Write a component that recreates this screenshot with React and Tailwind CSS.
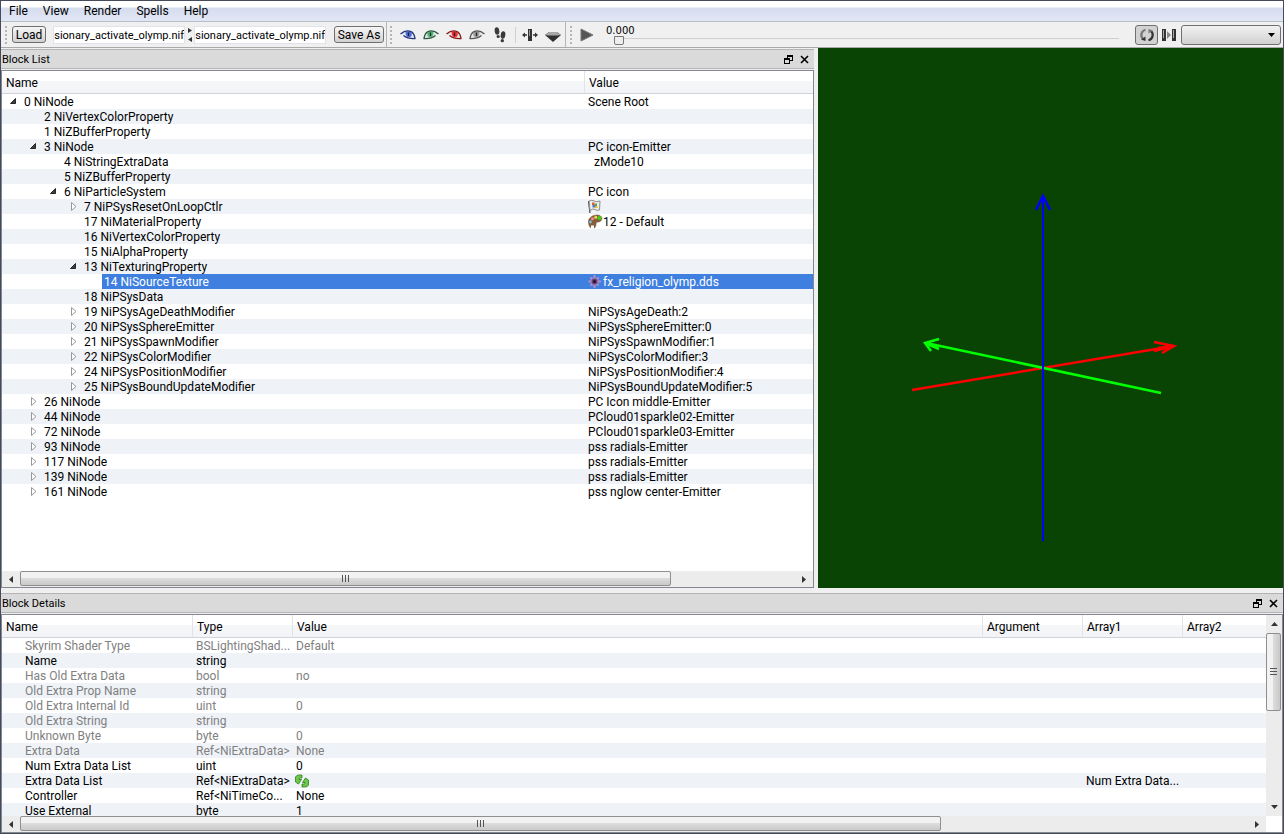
const menuItems = ["File", "View", "Render", "Spells", "Help"];

// depth, state of the arrow, name, value, icon
const blocks = [
    { depth: 0, arrow: "open", name: "0 NiNode", value: "Scene Root" },
    { depth: 1, name: "2 NiVertexColorProperty" },
    { depth: 1, name: "1 NiZBufferProperty" },
    { depth: 1, arrow: "open", name: "3 NiNode", value: "PC icon-Emitter" },
    { depth: 2, name: "4 NiStringExtraData", value: "\u00a0\u00a0zMode10" },
    { depth: 2, name: "5 NiZBufferProperty" },
    { depth: 2, arrow: "open", name: "6 NiParticleSystem", value: "PC icon" },
    { depth: 3, arrow: "closed", name: "7 NiPSysResetOnLoopCtlr", icon: "flag" },
    { depth: 3, name: "17 NiMaterialProperty", value: "12 - Default", icon: "palette" },
    { depth: 3, name: "16 NiVertexColorProperty" },
    { depth: 3, name: "15 NiAlphaProperty" },
    { depth: 3, arrow: "open", name: "13 NiTexturingProperty" },
    { depth: 4, name: "14 NiSourceTexture", value: "fx_religion_olymp.dds", icon: "flower", selected: true },
    { depth: 3, name: "18 NiPSysData" },
    { depth: 3, arrow: "closed", name: "19 NiPSysAgeDeathModifier", value: "NiPSysAgeDeath:2" },
    { depth: 3, arrow: "closed", name: "20 NiPSysSphereEmitter", value: "NiPSysSphereEmitter:0" },
    { depth: 3, arrow: "closed", name: "21 NiPSysSpawnModifier", value: "NiPSysSpawnModifier:1" },
    { depth: 3, arrow: "closed", name: "22 NiPSysColorModifier", value: "NiPSysColorModifier:3" },
    { depth: 3, arrow: "closed", name: "24 NiPSysPositionModifier", value: "NiPSysPositionModifier:4" },
    { depth: 3, arrow: "closed", name: "25 NiPSysBoundUpdateModifier", value: "NiPSysBoundUpdateModifier:5" },
    { depth: 1, arrow: "closed", name: "26 NiNode", value: "PC Icon middle-Emitter" },
    { depth: 1, arrow: "closed", name: "44 NiNode", value: "PCloud01sparkle02-Emitter" },
    { depth: 1, arrow: "closed", name: "72 NiNode", value: "PCloud01sparkle03-Emitter" },
    { depth: 1, arrow: "closed", name: "93 NiNode", value: "pss radials-Emitter" },
    { depth: 1, arrow: "closed", name: "117 NiNode", value: "pss radials-Emitter" },
    { depth: 1, arrow: "closed", name: "139 NiNode", value: "pss radials-Emitter" },
    { depth: 1, arrow: "closed", name: "161 NiNode", value: "pss nglow center-Emitter" },
];

const details = [
    { name: "Skyrim Shader Type", type: "BSLightingShad...", value: "Default", off: true },
    { name: "Name", type: "string" },
    { name: "Has Old Extra Data", type: "bool", value: "no", off: true },
    { name: "Old Extra Prop Name", type: "string", off: true },
    { name: "Old Extra Internal Id", type: "uint", value: "0", off: true },
    { name: "Old Extra String", type: "string", off: true },
    { name: "Unknown Byte", type: "byte", value: "0", off: true },
    { name: "Extra Data", type: "Ref<NiExtraData>", value: "None", off: true },
    { name: "Num Extra Data List", type: "uint", value: "0" },
    { name: "Extra Data List", type: "Ref<NiExtraData>", icon: "refresh", array1: "Num Extra Data..." },
    { name: "Controller", type: "Ref<NiTimeCo...", value: "None" },
    { name: "Use External", type: "byte", value: "1" },
];

const indents = ["w-[20px]", "w-[40px]", "w-[60px]", "w-[80px]", "w-[100px]"];

function Arrow({ state }) {
    if (state === "open") {
        return (
            <svg width="10" height="10" className="mr-1">
                <path d="M7.500 1.500V6.500H2.500Z" fill="#404040" stroke="#262626" />
            </svg>
        );
    }
    return (
        <svg width="10" height="10" className="mr-1">
            <path d="M3.500 0.500L8 4.500L3.500 8.500Z" fill="#fff" stroke="#989898" />
        </svg>
    );
}

function CellIcon({ name }) {
    if (name === "flag") {
        return (
            <svg width="15" height="15" viewBox="0 0 15 15" className="shrink-0">
                <path d="M0.500 2L2 14" stroke="#444" strokeWidth="1.200" />
                <path d="M1 2Q4 0.500 6 2T12 2L11.500 11Q9 12 7 10.500T2 11.500Z" fill="#eeeeea" stroke="#8d8d88" />
                <path d="M4 3.500h2.500v2.500H4z" fill="#e8553a" />
                <path d="M6.500 4.500H9V7H6.500z" fill="#56a84c" />
                <path d="M4.500 6h2.500v2.500H4.500z" fill="#4674cc" />
                <path d="M7 7h2.500v2H7z" fill="#efb92e" />
            </svg>
        );
    }
    if (name === "palette") {
        return (
            <svg width="15" height="15" viewBox="0 0 15 15" className="shrink-0">
                <path d="M0.500 9C-0.500 4 5 0.500 10 1c4.500 0.500 5 5 2 6.500-2 1-4 0-4 2.500 0 3-1.500 4.500-3.500 4.500S1 12.500 0.500 9z" fill="#86603a" stroke="#6b4a26" strokeWidth="0.500" />
                <circle cx="2.500" cy="8" r="1.400" fill="#7fb6e8" />
                <circle cx="4.500" cy="4.700" r="1.500" fill="#f08a9a" />
                <circle cx="7.800" cy="3.200" r="1.500" fill="#e9e040" />
                <circle cx="11.500" cy="4" r="2" fill="#3fd020" />
                <path d="M3 11.500h3V15H3z" fill="#fff" />
            </svg>
        );
    }
    if (name === "flower") {
        return (
            <svg width="15" height="15" viewBox="0 0 15 15" className="shrink-0">
                <g stroke="#a58cc8" strokeWidth="2.400" strokeLinecap="round">
                    <path d="M6.500 2V13M1.500 7.500H12M3 4L10 11M10 4L3 11" />
                </g>
                <circle cx="6.500" cy="7.500" r="3" fill="#6b3f70" />
                <circle cx="6.500" cy="7.500" r="1.500" fill="#1f1233" />
            </svg>
        );
    }
    return (
        <svg width="14" height="14" viewBox="0 0 14 14" className="-ml-px shrink-0">
            <path d="M0.500 8V3Q1.500 0.800 4.500 1H7V4H5Q4 4 4 5.500H6.500L3.500 10Z" fill="#6cc84a" stroke="#2e7d1e" strokeWidth="0.800" />
            <path d="M13.500 6V11Q12.500 13.200 9.500 13H7V10H9Q10 10 10 8.500H7.500L10.500 4Z" fill="#6cc84a" stroke="#2e7d1e" strokeWidth="0.800" />
        </svg>
    );
}

function Eye({ color, dark, flip }) {
    return (
        <svg width="16" height="16" viewBox="0 0 16 16" className={flip ? "-scale-x-100" : ""}>
            <path d="M1 6.500Q6 2.500 11 5Q14 7 15 11.500Q8 11.500 4.500 9.500Z" fill="#e6e6e6" />
            <path d="M5.500 5Q5.500 10 9 10.500Q12.500 10 11.500 5.500Q8.500 3.500 5.500 5Z" fill={color} />
            <path d="M8.500 5.500V9" stroke="#222" strokeWidth="1.300" />
            <path d="M0.500 7Q6 2.300 11.500 4.800Q14.500 7 15 11.500Q8 12 3.500 8.500" fill="none" stroke={dark} strokeWidth="1.300" />
        </svg>
    );
}

function Grip() {
    return (
        <svg width="4" height="20" className="shrink-0">
            <path d="M2 1V20" stroke="#b5b5b5" strokeWidth="2" strokeDasharray="2 2" />
        </svg>
    );
}

function DockTitle({ title }) {
    return (
        <div className="flex h-5 shrink-0 items-center border-y border-[#b4b4b4] bg-[#dadada] pr-1 pl-px text-[11px]">
            <h2 className="flex-1 pt-[2px]">{title}</h2>
            <button type="button" aria-label={"Float " + title} className="mr-1 flex size-3 items-center justify-center">
                <svg width="9" height="9">
                    <path d="M3 0H9V6H6V9H0V3H3Z" />
                    <path d="M4 2H8V5H6V3H4ZM1 5H5V8H1Z" fill="#dadada" />
                </svg>
            </button>
            <button type="button" aria-label={"Close " + title} className="flex size-3 items-center justify-center">
                <svg width="9" height="9">
                    <path d="M1 1L8 8M8 1L1 8" stroke="#000" strokeWidth="1.6" />
                </svg>
            </button>
        </div>
    );
}

function HScroll({ thumb }) {
    return (
        <div className="flex h-4 w-full shrink-0 bg-[#ececec]">
            <button type="button" aria-label="Scroll left" className="flex w-[18px] items-center justify-center">
                <svg width="4" height="7"><path d="M4 0V7L0 3.500Z" fill="#333" /></svg>
            </button>
            <div className="flex-1">
                <div className={"flex h-[15px] items-center justify-center gap-[2px] rounded-xs border border-[#8f8f8f] bg-linear-to-b from-[#f2f2f2] from-45% via-[#dcdcdc] via-50% to-[#c9c9c9] " + thumb}>
                    <i className="h-[7px] w-px bg-[#555]" />
                    <i className="h-[7px] w-px bg-[#555]" />
                    <i className="h-[7px] w-px bg-[#555]" />
                </div>
            </div>
            <button type="button" aria-label="Scroll right" className="flex w-[18px] items-center justify-center">
                <svg width="4" height="7"><path d="M0 0V7L4 3.500Z" fill="#333" /></svg>
            </button>
        </div>
    );
}

const thClass = "border-b border-[#d0d4d8] border-r border-r-[#e0e3e8] p-0 pt-[2px] pl-1 text-left font-normal last:border-r-0";
const headClass = "h-[23px] bg-linear-to-b from-white from-45% via-[#f6f7f9] via-45% to-[#f1f3f6]";

function BlockList() {
    return (
        <section className="flex min-h-0 min-w-0 flex-col pt-px">
            <DockTitle title="Block List" />
            <div className="mt-px flex min-h-0 flex-1 flex-col border border-[#828790] bg-white">
                <div className="min-h-0 flex-1 overflow-hidden">
                    <table className="w-full table-fixed border-separate border-spacing-0">
                        <thead>
                            <tr className={headClass}>
                                <th className={thClass}>Name</th>
                                <th className={thClass + " w-[228px]"}>Value</th>
                            </tr>
                        </thead>
                        <tbody>
                            {blocks.map((block) => (
                                <tr key={block.name} className="h-[15px] leading-[14px] even:bg-[#eff3f8]">
                                    <td className="p-0">
                                        <div className="flex h-[15px]">
                                            <span className={"flex shrink-0 items-center justify-end " + indents[block.depth]}>
                                                {block.arrow && <Arrow state={block.arrow} />}
                                            </span>
                                            <span className={block.selected ? "flex-1 bg-[#3f7fe0] pt-px pl-[2px] text-white" : "flex-1 pt-px pl-[2px]"}>
                                                {block.name}
                                            </span>
                                        </div>
                                    </td>
                                    <td className={block.selected ? "bg-[#3f7fe0] p-0 pl-[3px] text-white" : "p-0 pl-[3px]"}>
                                        <div className="flex h-[15px] items-center">
                                            {block.icon && <CellIcon name={block.icon} />}
                                            <span className="pt-px">{block.value}</span>
                                        </div>
                                    </td>
                                </tr>
                            ))}
                        </tbody>
                    </table>
                </div>
                <HScroll thumb="w-[84%]" />
            </div>
        </section>
    );
}

function Viewport() {
    return (
        <section className="min-h-0 min-w-0 bg-[#094405]">
            <svg viewBox="0 0 465 540" className="h-full w-full" fill="none" strokeWidth="2.500">
                <path d="M94 342L356 298M336 294L356 298L344 305M336 303L356 298L340 300" stroke="#f00" />
                <path d="M343 345L108 295M121 291L107 295L113 303M107 295L121 301" stroke="#0f0" />
                <path d="M225 147V493" stroke="#00f" strokeWidth="2" shapeRendering="crispEdges" />
                <path d="M218 162L225 148L232 162" stroke="#00f" />
            </svg>
        </section>
    );
}

function BlockDetails() {
    return (
        <section className="mt-[5px] flex h-[240px] shrink-0 flex-col">
            <DockTitle title="Block Details" />
            <div className="mt-px flex min-h-0 flex-1 border border-[#828790] bg-white">
                <div className="flex min-w-0 flex-1 flex-col">
                    <div className="min-h-0 flex-1 overflow-hidden">
                        <table className="w-full table-fixed border-separate border-spacing-0">
                            <thead>
                                <tr className={headClass}>
                                    <th className={thClass + " w-[191px]"}>Name</th>
                                    <th className={thClass + " w-[100px]"}>Type</th>
                                    <th className={thClass}>Value</th>
                                    <th className={thClass + " w-[100px]"}>Argument</th>
                                    <th className={thClass + " w-[100px]"}>Array1</th>
                                    <th className={thClass + " w-[83px]"}>Array2</th>
                                </tr>
                            </thead>
                            <tbody>
                                {details.map((row) => (
                                    <tr
                                        key={row.name}
                                        className={row.off ? "h-[15px] leading-[14px] text-[#808080] even:bg-[#eff3f8]" : "h-[15px] leading-[14px] even:bg-[#eff3f8]"}
                                    >
                                        <td className="p-0 pt-px pl-[23px]">{row.name}</td>
                                        <td className="p-0 pt-px pl-[3px] whitespace-nowrap">{row.type}</td>
                                        <td className="p-0 pl-[3px]">
                                            <div className="flex h-[15px] items-center">
                                                {row.icon && <CellIcon name={row.icon} />}
                                                <span className="pt-px">{row.value}</span>
                                            </div>
                                        </td>
                                        <td className="p-0" />
                                        <td className="p-0 pt-px pl-[3px] whitespace-nowrap">{row.array1}</td>
                                        <td className="p-0" />
                                    </tr>
                                ))}
                            </tbody>
                        </table>
                    </div>
                    <HScroll thumb="w-[75%]" />
                </div>
                <div className="flex w-4 shrink-0 flex-col">
                    <div className="flex min-h-0 flex-1 flex-col bg-[#ececec]">
                        <button type="button" aria-label="Scroll up" className="flex h-[18px] items-center justify-center">
                            <svg width="7" height="4"><path d="M0 4H7L3.500 0Z" fill="#333" /></svg>
                        </button>
                        <div className="flex-1">
                            <div className="flex h-[47%] w-[15px] flex-col items-center justify-center gap-[2px] rounded-xs border border-[#8f8f8f] bg-linear-to-r from-[#f2f2f2] from-45% via-[#dcdcdc] via-50% to-[#c9c9c9]">
                                <i className="h-px w-[7px] bg-[#555]" />
                                <i className="h-px w-[7px] bg-[#555]" />
                                <i className="h-px w-[7px] bg-[#555]" />
                            </div>
                        </div>
                        <button type="button" aria-label="Scroll down" className="flex h-[18px] items-center justify-center">
                            <svg width="7" height="4"><path d="M0 0H7L3.500 4Z" fill="#333" /></svg>
                        </button>
                    </div>
                    <div className="h-4 bg-white" />
                </div>
            </div>
        </section>
    );
}

const pushButton = "h-[17px] shrink-0 rounded-[3px] border border-[#6f6f6f] bg-linear-to-b from-[#f6f6f6] to-[#d2d2d2] leading-none whitespace-nowrap";
const fileInput = "h-[18px] w-[132px] border border-[#e2e3ea] bg-white px-0 pt-px text-[11px]";

function Toolbar() {
    return (
        <div className="flex h-[26px] shrink-0 items-center border-b border-[#a9a9a9] bg-[#f0f0f0] pl-[3px]">
            <Grip />
            <button type="button" className={pushButton + " ml-1 w-[34px]"}>Load</button>
            {/* rtl keeps the end of a long path in view */}
            <input dir="rtl" aria-label="Load file" defaultValue="sionary_activate_olymp.nif" className={fileInput + " ml-[7px]"} />
            <svg width="9" height="18" className="shrink-0">
                <path d="M3 2V7L7 4.500ZM7 11V16L3 13.500Z" fill="#333" />
            </svg>
            <input dir="rtl" aria-label="Save file" defaultValue="sionary_activate_olymp.nif" className={fileInput} />
            <button type="button" className={pushButton + " ml-2 w-[50px]"}>Save As</button>
            <div className="ml-[2px] flex h-full items-center gap-[7px] border-l border-[#b5b5b5] pl-[2px]">
                <Grip />
                <button type="button" aria-label="Draw axes"><Eye color="#4a6be0" dark="#22357f" /></button>
                <button type="button" aria-label="Draw nodes"><Eye color="#4db878" dark="#2b5a3c" flip /></button>
                <button type="button" aria-label="Draw havok"><Eye color="#ee3030" dark="#8a1a1a" /></button>
                <button type="button" aria-label="Draw hidden"><Eye color="#9a9a9a" dark="#555555" flip /></button>
                <button type="button" aria-label="Walk">
                    <svg width="16" height="16" viewBox="0 0 16 16" fill="#3a3a3a">
                        <ellipse cx="5" cy="4" rx="2.300" ry="3.700" transform="rotate(-10 5 4)" />
                        <ellipse cx="6.200" cy="9.500" rx="1.600" ry="1.500" />
                        <ellipse cx="11" cy="8" rx="2.300" ry="3.700" transform="rotate(10 11 8)" />
                        <ellipse cx="10.300" cy="13.700" rx="1.700" ry="1.600" />
                    </svg>
                </button>
                <span className="h-4 w-px bg-[#d0d0d0]" />
                <button type="button" aria-label="Flip view" className="-ml-px">
                    <svg width="16" height="16" viewBox="0 0 16 16">
                        <path d="M6 2h4v12h-4z" fill="#333" />
                        <path d="M7 3h1v6h-1z" fill="#999" />
                        <path d="M0 8L3 5.500V7.300H5V8.700H3V10.500ZM16 8L13 5.500V7.300H11V8.700H13V10.500Z" fill="#333" />
                    </svg>
                </button>
                <button type="button" aria-label="Perspective">
                    <svg width="16" height="16" viewBox="0 0 16 16">
                        <path d="M0 8L4 5H12L16 8L8 15Z" fill="#303030" />
                        <path d="M0 8L4 5H12L16 8Q8 9 0 8Z" fill="#a8a8a8" />
                    </svg>
                </button>
            </div>
            <div className="ml-1 flex h-full flex-1 items-center border-l border-[#b5b5b5] pl-[3px]">
                <Grip />
                <button type="button" aria-label="Play" className="ml-[7px]">
                    <svg width="14" height="14"><path d="M1 1L13 7L1 13Z" fill="#555" stroke="#777" /></svg>
                </button>
                <label className="ml-3 flex h-full flex-1 flex-col pt-[4px] text-[10px]">
                    <span className="leading-[9px] font-['DejaVu_Sans',sans-serif]">0.000</span>
                    <input
                        type="range"
                        defaultValue="0"
                        className="ml-2 h-[10px] appearance-none bg-linear-to-b from-transparent from-30% via-[#b0b0b0] via-30% to-transparent to-40% [&::-webkit-slider-thumb]:h-[9px] [&::-webkit-slider-thumb]:w-[10px] [&::-webkit-slider-thumb]:appearance-none [&::-webkit-slider-thumb]:rounded-b-xs [&::-webkit-slider-thumb]:border [&::-webkit-slider-thumb]:border-[#777] [&::-webkit-slider-thumb]:bg-[#eee]"
                    />
                </label>
                <button type="button" aria-label="Loop" className="ml-4 flex h-5 w-[23px] items-center justify-center rounded-[3px] border border-[#6f6f6f] bg-[#d2d2d2]">
                    <svg width="16" height="16" viewBox="0 0 16 16" fill="none">
                        <path d="M6.500 2.700A5.500 5.500 0 0 0 4 12" stroke="#777" strokeWidth="2.200" />
                        <path d="M9.500 13.300A5.500 5.500 0 0 0 12 4" stroke="#333" strokeWidth="2.200" />
                        <path d="M2 12.500L6.500 9.500V14Z" fill="#333" />
                        <path d="M14 3.500L9.500 6.500V2Z" fill="#777" />
                    </svg>
                </button>
                <button type="button" aria-label="Switch animation" className="ml-1">
                    <svg width="14" height="12">
                        <path d="M0 0H4V12H0ZM10 0H14V12H10Z" fill="#333" />
                        <path d="M1 1H2V9H1ZM11 1H12V9H11Z" fill="#aaa" />
                        <path d="M5 2L9 6L5 10Z" fill="#888" />
                    </svg>
                </button>
                <div className="relative mr-[2px] ml-[5px]">
                    <select aria-label="Animation group" className="block h-5 w-[100px] appearance-none rounded-[3px] border border-[#6f6f6f] bg-linear-to-b from-[#f2f2f2] to-[#d0d0d0]" />
                    <svg width="7" height="4" className="pointer-events-none absolute top-2 right-[6px]">
                        <path d="M0 0H7L3.500 4Z" />
                    </svg>
                </div>
            </div>
        </div>
    );
}

export default function App() {
    return (
        <main className="flex h-screen flex-col overflow-hidden border border-[#454b5c] bg-[#f0f0f0] font-[Roboto,'Open_Sans',sans-serif] text-[12px] text-black">
            <nav className="flex h-[21px] shrink-0 items-center gap-[15px] border-b border-[#b6bccc] bg-linear-to-b from-white from-30% via-[#d5dcee] via-35% to-[#e2e7f5] pl-2">
                {menuItems.map((item) => (
                    <button type="button" key={item} className="leading-none">{item}</button>
                ))}
            </nav>
            <Toolbar />
            <div className="grid min-h-0 flex-1 grid-cols-[813fr_465fr] gap-1">
                <BlockList />
                <Viewport />
            </div>
            <BlockDetails />
        </main>
    );
}
